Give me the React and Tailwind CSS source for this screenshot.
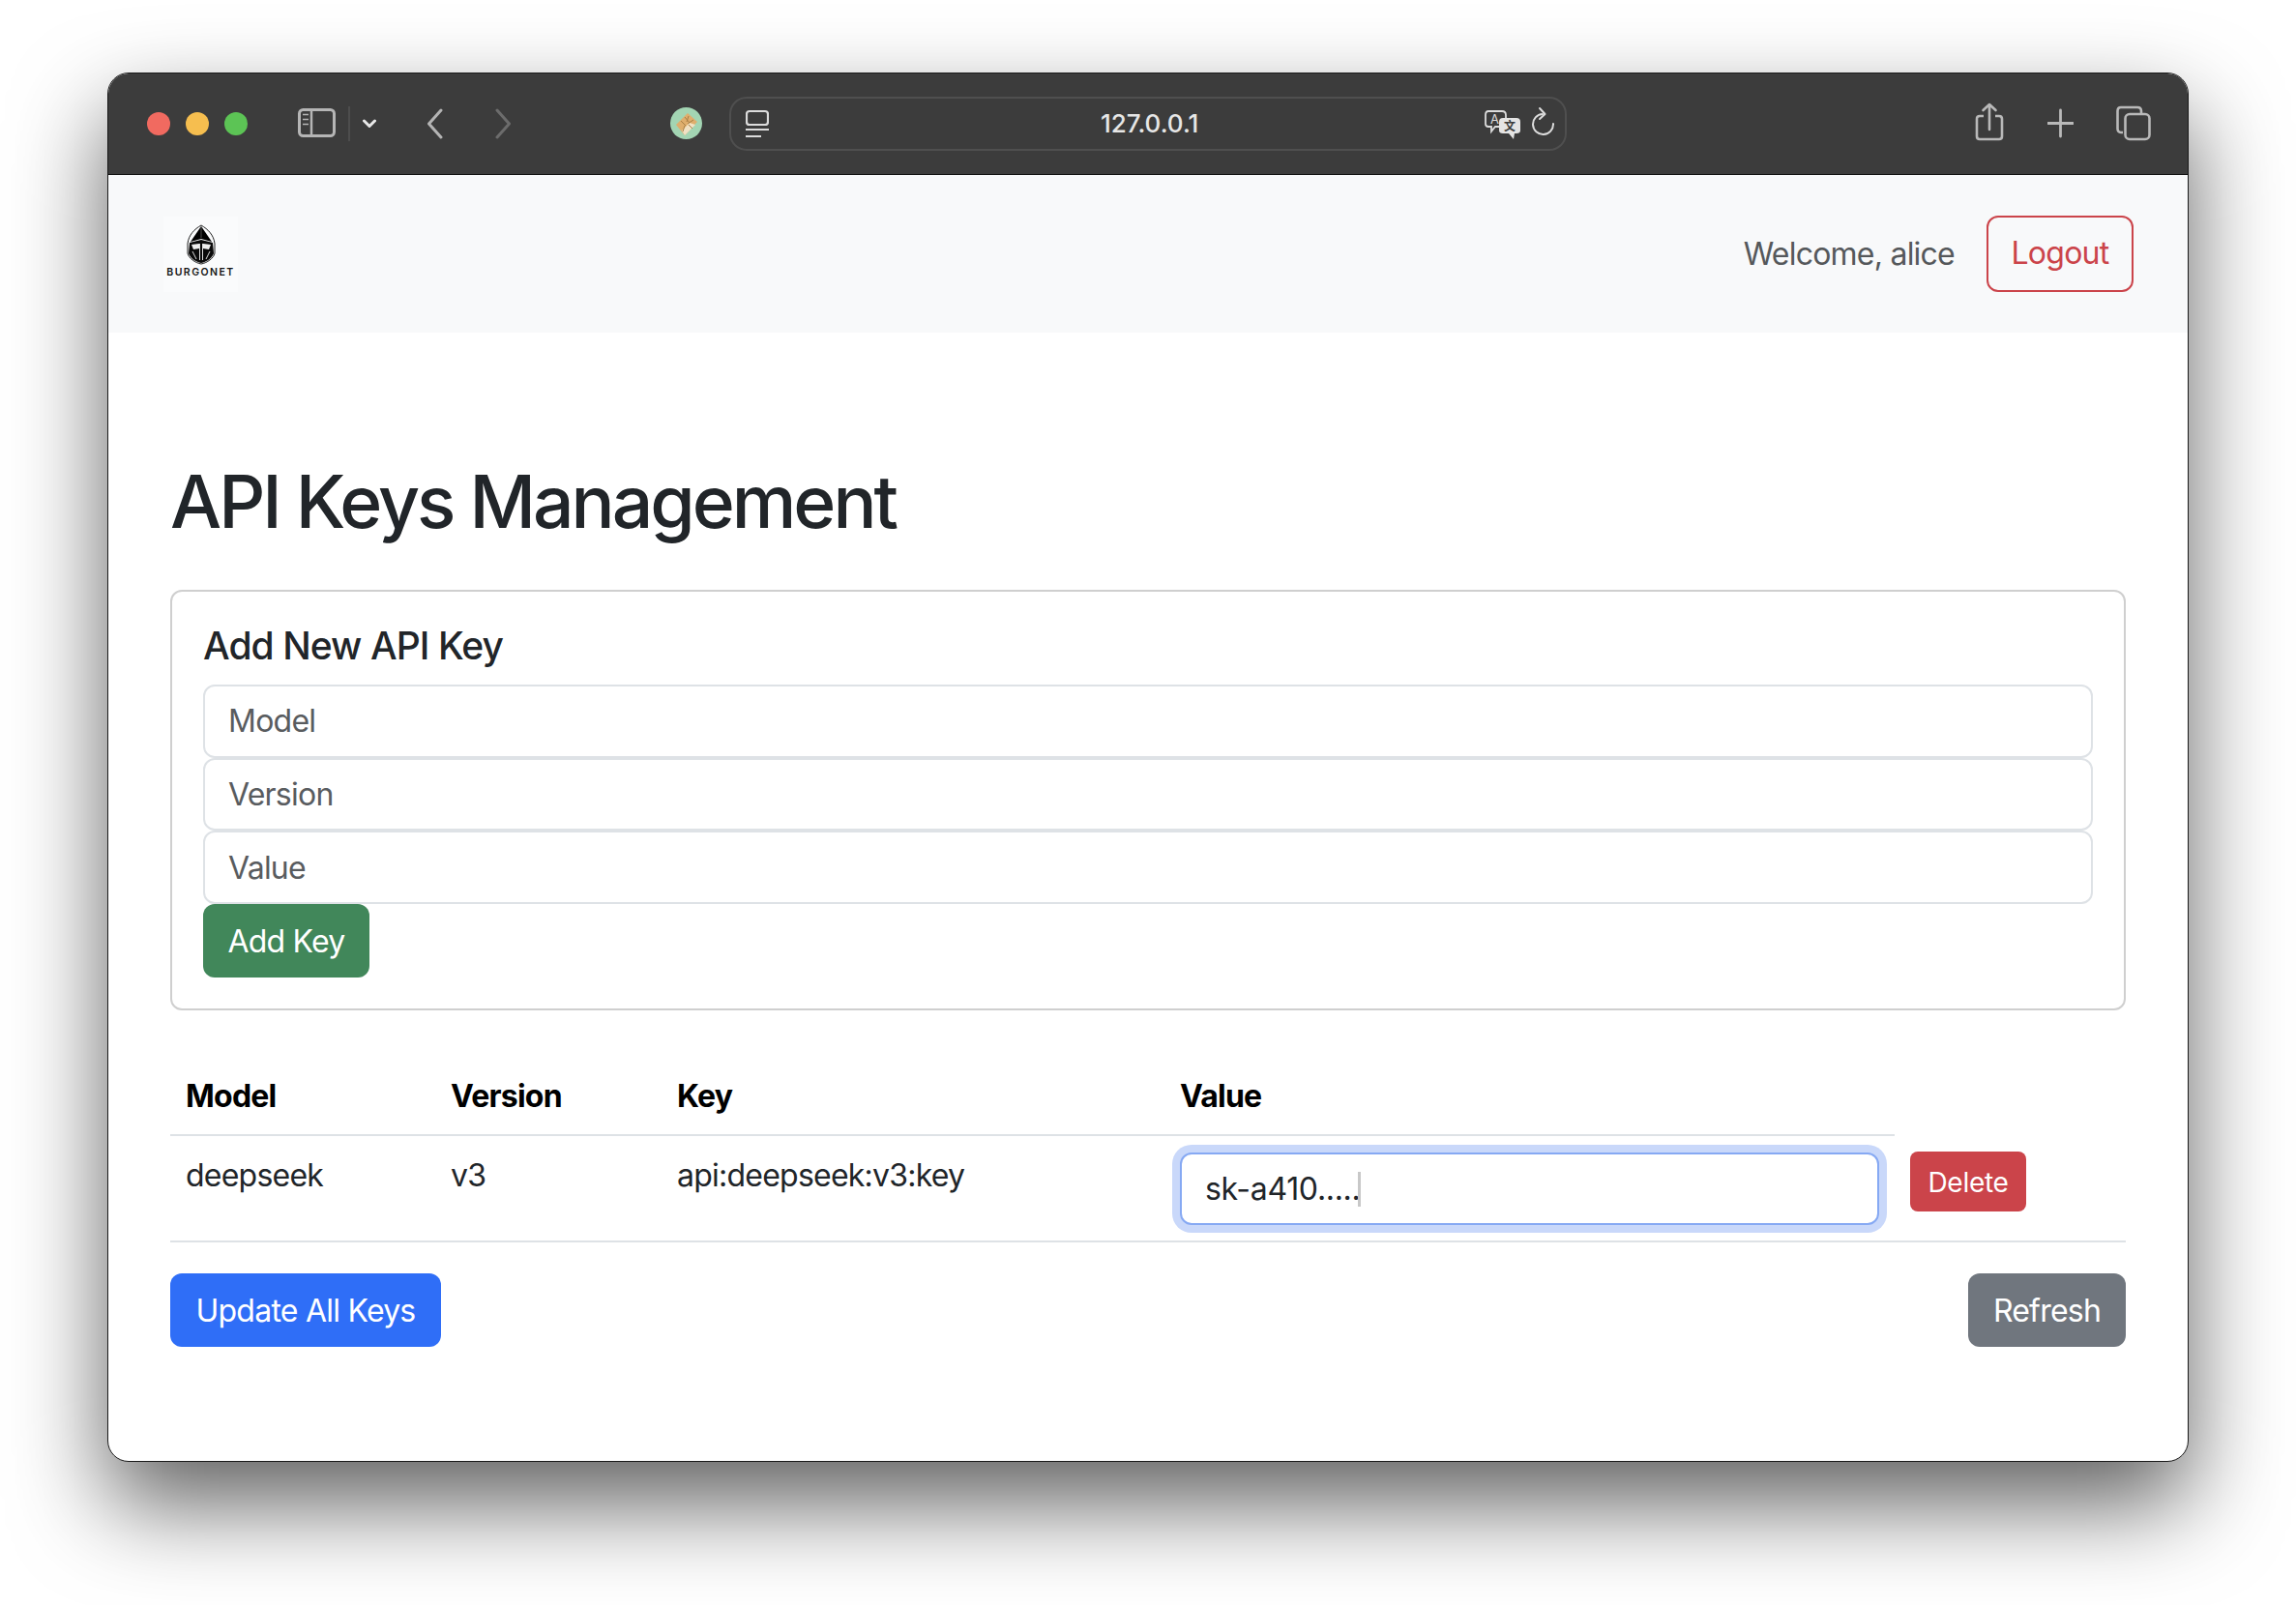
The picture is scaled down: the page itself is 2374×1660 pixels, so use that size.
const uiFont = "font-['Inter','Liberation_Sans',sans-serif]";

function Svg({ w, children }) {
  return (
    <svg width={w} height="60" viewBox={`0 0 ${w} 60`} fill="none" className="block shrink-0">
      {children}
    </svg>
  );
}

function Helmet() {
  return (
    <svg width="32" height="42" viewBox="0 0 32 42" className="block">
      <path d="M16 1 C23 5 29 11 30 20 L30 30 C29 35 22 40 16 41 C10 40 3 35 2 30 L2 20 C3 11 9 5 16 1Z" fill="none" stroke="#222" strokeWidth="1" />
      <path d="M16 2 L27 18 L16 15 L5 18Z" fill="#000" />
      <path d="M16 3 L16 14" stroke="#666" strokeWidth="0.8" />
      <path d="M4 19 L16 16 L28 19 L29 30 C28 34 22 39 16 40 C10 39 4 34 3 30Z" fill="#0a0a0a" />
      <path d="M6 21 L14 20 L14 25 L8 26Z M26 21 L18 20 L18 25 L24 26Z" fill="#eee" />
      <path d="M14.5 20 L14.5 37 M17.5 20 L17.5 37 M7 28 L11 36 M25 28 L21 36" stroke="#ddd" strokeWidth="1" />
    </svg>
  );
}

function Favicon() {
  return (
    <svg width="33" height="33" viewBox="0 0 33 33" className="block shrink-0">
      <circle cx="16.5" cy="16.5" r="16.5" fill="#a3d5b3" />
      <path d="M18 6 L28 15 L15 29 L6 18Z" fill="#dfae6d" />
      <path d="M12 24 L20 16 L26 18 L15 29Z" fill="#f1e1c4" />
      <path d="M11 14 L16 19 M15 10 L20 16 M19 9 L17 15 M24 13 L18 17 M15 19 L13 25 M19 18 L23 22" stroke="#a87f45" strokeWidth="1" />
    </svg>
  );
}

function TitleBar() {
  return (
    <div className="flex h-[104px] shrink-0 items-center bg-[#3c3c3c] pb-[1px] pl-[40px] tracking-normal">
      <div className="flex gap-4">
        <div className="h-6 w-6 rounded-full bg-[#f16a60]" />
        <div className="h-6 w-6 rounded-full bg-[#f6be4f]" />
        <div className="h-6 w-6 rounded-full bg-[#5cc455]" />
      </div>
      <div className="ml-[52px]">
        <Svg w={39}>
          <rect x="1.5" y="15.5" width="36" height="27" rx="4" stroke="#b5b5b5" strokeWidth="3" />
          <path d="M14 15 L14 43" stroke="#b5b5b5" strokeWidth="2.5" />
          <path d="M5 20.5 H11 M5 25.5 H11 M5 30.5 H11" stroke="#b5b5b5" strokeWidth="1.6" />
        </Svg>
      </div>
      <div className="ml-[13px] h-[36px] w-[2px] bg-[#4d4d4d]" />
      <div className="ml-[13px]">
        <Svg w={14}>
          <path d="M1.5 27 L7 32.5 L12.5 27" stroke="#e8e8e8" strokeWidth="3" strokeLinecap="round" strokeLinejoin="round" />
        </Svg>
      </div>
      <div className="ml-[52px]">
        <Svg w={17}>
          <path d="M15 16 L2.5 30 L15 44" stroke="#b4b4b4" strokeWidth="3" strokeLinecap="round" strokeLinejoin="round" />
        </Svg>
      </div>
      <div className="ml-[54px]">
        <Svg w={17}>
          <path d="M2 16 L14.5 30 L2 44" stroke="#6c6c6c" strokeWidth="3" strokeLinecap="round" strokeLinejoin="round" />
        </Svg>
      </div>
      <div className="ml-[164px]">
        <Favicon />
      </div>
      <div className="ml-[28px] flex h-[56px] w-[866px] items-center rounded-[18px] border-2 border-[#4f4f4f] pl-[15px] pr-[10px]">
        <Svg w={24}>
          <rect x="1" y="17" width="22" height="14" rx="3" stroke="#dcdcdc" strokeWidth="2.2" />
          <path d="M0 36 H24 M0 43 H16" stroke="#dcdcdc" strokeWidth="2.2" />
        </Svg>
        <span className="ml-[343px] text-[26px] font-medium leading-none text-[#e6e6e6]">127.0.0.1</span>
        <div className="ml-auto flex items-center gap-[11px]">
          <Svg w={39}>
            <path d="M5 17 H19 Q23 17 23 21 V30 Q23 33 19 33 H12 L8 38 L8 33 H5 Q2 33 2 30 V21 Q2 17 5 17Z" stroke="#dcdcdc" strokeWidth="1.8" fill="#3c3c3c" />
            <text x="7" y="30" fontSize="13" fill="#dcdcdc" fontFamily="Inter, sans-serif">A</text>
            <path d="M20 24 H34 Q38 24 38 28 V37 Q38 40 34 40 H32 L31 46 L26 40 H20 Q16 40 16 37 V28 Q16 24 20 24Z" fill="#e4e4e4" />
            <text x="21" y="37" fontSize="12" fontWeight="700" fill="#3c3c3c" fontFamily="'Noto Sans CJK SC', sans-serif">文</text>
          </Svg>
          <Svg w={24}>
            <path d="M11 20 A10.5 10.5 0 1 0 22 30" stroke="#dcdcdc" strokeWidth="2" strokeLinecap="round" />
            <path d="M8 14 L13.5 20 L8 25" stroke="#dcdcdc" strokeWidth="2" strokeLinecap="round" strokeLinejoin="round" />
          </Svg>
        </div>
      </div>
      <div className="ml-[422px]">
        <Svg w={30}>
          <path d="M9 22 H5 Q2 22 2 25 V43 Q2 46 5 46 H25 Q28 46 28 43 V25 Q28 22 25 22 H21" stroke="#b9b9b9" strokeWidth="2.6" />
          <path d="M15 36 V11 M8.5 16 L15 10 L21.5 16" stroke="#b9b9b9" strokeWidth="2.6" strokeLinecap="round" strokeLinejoin="round" />
        </Svg>
      </div>
      <div className="ml-[45px]">
        <Svg w={27}>
          <path d="M13.5 16 V43 M0.5 29.5 H26.5" stroke="#b9b9b9" strokeWidth="2.8" strokeLinecap="round" />
        </Svg>
      </div>
      <div className="ml-[44px]">
        <Svg w={36}>
          <path d="M7 39 H5 Q1.5 39 1.5 35 V17 Q1.5 13 5 13 H22 Q26 13 26 17 V19" stroke="#b9b9b9" strokeWidth="2.6" />
          <rect x="9.5" y="20" width="25" height="26" rx="4.5" stroke="#b9b9b9" strokeWidth="2.6" />
        </Svg>
      </div>
    </div>
  );
}

function FormInput({ placeholder }) {
  return (
    <input
      placeholder={placeholder}
      className="block h-[75.7px] w-full rounded-xl border-2 border-[#dee2e6] bg-white px-6 text-[32px] text-[#212529] outline-none placeholder:text-[#595c5f]"
    />
  );
}

const thClass = "border-b-2 border-[#dee2e6] px-4 pb-[15px] pt-4 text-left text-[32px] font-bold leading-[48px] text-black";
const tdClass = "border-b-2 border-[#dee2e6] px-4 pb-4 pt-[17px] align-top text-[32px] leading-[48px] text-[#212529]";

export default function App() {
  return (
    <div className={`${uiFont} min-h-[1660px] overflow-hidden bg-white pl-[111px] pt-[75px] text-[32px] tracking-[-0.024em]`}>
      <div className="flex h-[1437px] w-[2152px] flex-col overflow-hidden rounded-[22px] border border-[#1a1a1a] bg-white shadow-[0_44px_96px_rgba(0,0,0,0.62)]">
        <TitleBar />
        <nav className="flex h-[164px] shrink-0 items-center justify-between border-t border-t-[#111] bg-[#f8f9fa] pl-[57px] pr-[56px]">
          <div className="flex h-[78px] w-[77px] flex-col items-center justify-center bg-[#fafbfc] pb-[6px]">
            <Helmet />
            <span className="mt-[2px] whitespace-nowrap text-[10.5px] font-semibold leading-[12px] tracking-[0.14em] text-[#151515]">BURGONET</span>
          </div>
          <div className="flex items-center gap-[33px]">
            <span className="leading-[48px] text-[#55585b]">Welcome, alice</span>
            <button className="h-[79px] w-[152px] rounded-xl border-2 border-[#cb444a] pb-[2px] text-[#cb444a]">Logout</button>
          </div>
        </nav>

        <main className="flex flex-col px-[64px]">
          <h1 className="mt-[127px] text-[75px] font-medium leading-[96px] tracking-[-0.04em] text-[#212529]">API Keys Management</h1>

          <section className="mt-[43px] rounded-xl border-2 border-[#cfcfcf] p-8">
            <h5 className="mb-[16px] text-[39px] font-medium leading-[48px] tracking-[-0.024em] text-[#212529]">Add New API Key</h5>
            <FormInput placeholder="Model" />
            <FormInput placeholder="Version" />
            <FormInput placeholder="Value" />
            <button className="block h-[76px] w-[172px] rounded-xl bg-[#41875a] pt-[2px] text-[32px] text-white">Add Key</button>
          </section>

          <table className="mt-[49px] w-full table-fixed border-collapse">
            <colgroup>
              <col className="w-[274px]" />
              <col className="w-[234px]" />
              <col className="w-[520px]" />
              <col className="w-[755px]" />
              <col className="w-[239px]" />
            </colgroup>
            <thead>
              <tr>
                <th className={thClass}>Model</th>
                <th className={thClass}>Version</th>
                <th className={thClass}>Key</th>
                <th className={thClass}>Value</th>
                <th />
              </tr>
            </thead>
            <tbody>
              <tr>
                <td className={tdClass}>deepseek</td>
                <td className={tdClass}>v3</td>
                <td className={tdClass}>api:deepseek:v3:key</td>
                <td className={tdClass}>
                  <div className="relative">
                    <input
                      readOnly
                      value="sk-a410....."
                      className="block h-[75px] w-full rounded-xl border-2 border-[#86a9f3] bg-white px-6 text-[32px] tracking-[-0.01em] text-[#212529] shadow-[0_0_0_8px_#c9d8fa] outline-none"
                    />
                    <span className="absolute left-[184px] top-[20px] h-[36px] w-[3px] bg-[#c8c8c8]" />
                  </div>
                </td>
                <td className={tdClass}>
                  <button className="block h-[62px] w-[120px] rounded-lg bg-[#cb444a] pt-[2px] text-[28px] leading-none tracking-[-0.01em] text-white">Delete</button>
                </td>
              </tr>
            </tbody>
          </table>

          <div className="mt-[32px] flex justify-between">
            <button className="h-[76px] w-[280px] rounded-xl bg-[#2f6ef7] pt-[2px] text-[32px] text-white">Update All Keys</button>
            <button className="h-[76px] w-[163px] rounded-xl bg-[#70767e] pt-[2px] text-[32px] text-white">Refresh</button>
          </div>
        </main>
      </div>
    </div>
  );
}
